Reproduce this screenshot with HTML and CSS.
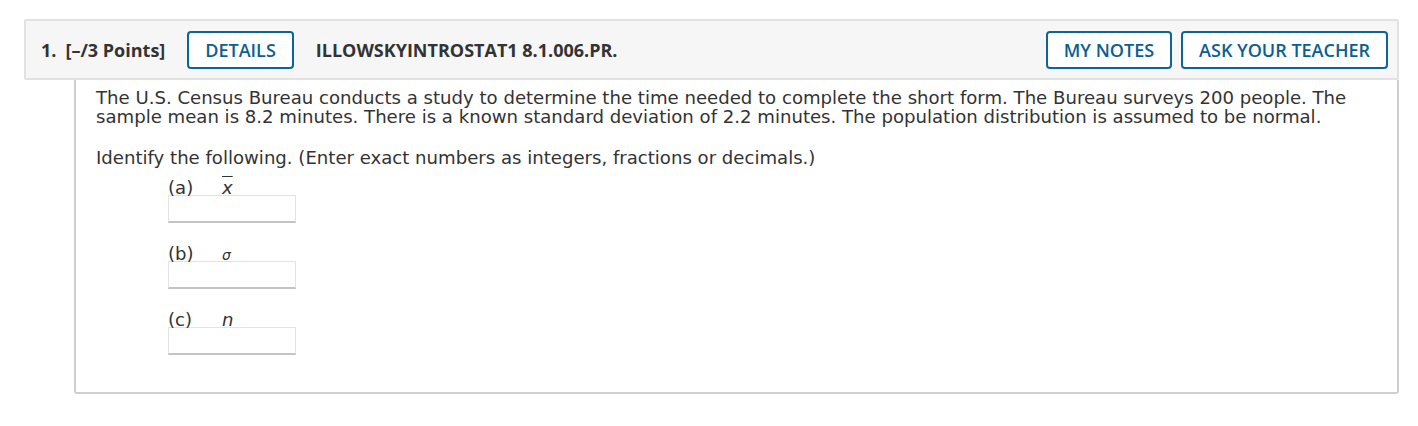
FILE: index.html
```html
<!DOCTYPE html>
<html>
<head>
<meta charset="utf-8">
<link rel="stylesheet" href="styles.css">
</head>
<body>
<div class="question">
  <div class="qhead">
    <div class="qnum"><span class="num">1.</span><span>[–/3 Points]</span></div>
    <button class="btn">DETAILS</button>
    <div class="qid">ILLOWSKYINTROSTAT1 8.1.006.PR.</div>
    <div class="spacer"></div>
    <button class="btn">MY NOTES</button>
    <button class="btn">ASK YOUR TEACHER</button>
  </div>
  <div class="qbody">
    <p class="text">The U.S. Census Bureau conducts a study to determine the time needed to complete the short form. The Bureau surveys 200 people. The sample mean is 8.2 minutes. There is a known standard deviation of 2.2 minutes. The population distribution is assumed to be normal.</p>
    <p class="text">Identify the following. (Enter exact numbers as integers, fractions or decimals.)</p>
    <div class="parts">
      <div class="part">
        <div class="plabel"><span class="letter">(a)</span><span class="var xbar">x</span></div>
        <div class="input"></div>
      </div>
      <div class="part">
        <div class="plabel"><span class="letter">(b)</span><span class="var small">σ</span></div>
        <div class="input"></div>
      </div>
      <div class="part">
        <div class="plabel"><span class="letter">(c)</span><span class="var nvar">n</span></div>
        <div class="input"></div>
      </div>
    </div>
  </div>
</div>
</body>
</html>
```

FILE: styles.css
```css
* { box-sizing: border-box; }
body {
  margin: 0;
  background: #fff;
  font-family: "DejaVu Sans", Verdana, sans-serif;
  color: #333;
}
.question {
  padding: 19px 19px 0 24px;
  width: 1418px;
}
.qhead {
  display: flex;
  align-items: center;
  height: 61px;
  background: #f6f6f6;
  border: 2px solid #e2e2e2;
  border-radius: 2px;
  padding: 0 9px 0 15px;
  font-family: "Open Sans", "Noto Sans", sans-serif;
}
.qnum {
  font-weight: 700;
  font-size: 18px;
  color: #333;
  display: flex;
  margin-right: 22px;
}
.qnum .num { margin-right: 9px; }
.qid {
  font-weight: 700;
  font-size: 18px;
  color: #333;
  margin-left: 22px;
}
.spacer { flex: 1; }
.btn {
  font-family: "Open Sans", "Noto Sans", sans-serif;
  font-weight: 600;
  font-size: 18px;
  color: #0b5e91;
  background: #fff;
  border: 2px solid #0b6598;
  border-radius: 4px;
  height: 38px;
  padding: 0 16px;
  margin-left: 9px;
  cursor: pointer;
}
.qhead .btn:first-of-type { margin-left: 0; }
.qbody {
  margin-left: 50px;
  height: 314px;
  border: 2px solid #cfcfcf;
  border-top: none;
  border-radius: 0 0 3px 3px;
  padding: 8px 20px 0 20px;
  font-size: 18.1px;
  line-height: 19px;
  color: #333;
}
.text { margin: 0 0 22px 0; }
.text + .text { margin-bottom: 11px; }
.parts {
  padding-left: 72px;
  display: flex;
  flex-direction: column;
  gap: 21px;
}
.plabel {
  display: flex;
  align-items: baseline;
  height: 17px;
  line-height: 19px;
}
.letter { width: 54px; }
.var { font-style: italic; }
.xbar { text-decoration: overline; }
.small { font-size: 14px; }
.input {
  width: 128px;
  height: 28px;
  background: #fff;
  border: 1px solid #e3e3e3;
  border-bottom: 2px solid #c4c4c4;
}
```
